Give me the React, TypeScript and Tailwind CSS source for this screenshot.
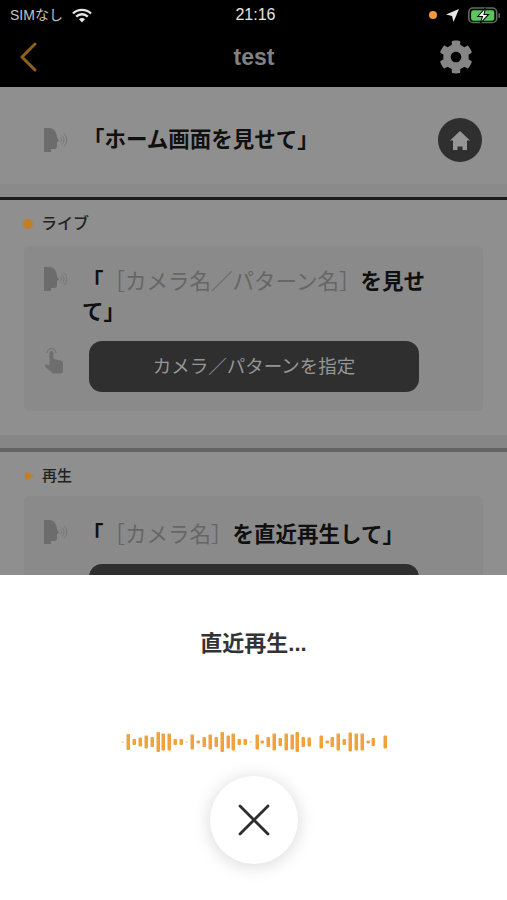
import { FaCog } from "react-icons/fa"

const JP = "font-['Liberation_Sans','Noto_Sans_CJK_JP',sans-serif]"

// [x, height] read off the reference
const bars: [number, number][] = [
  [123, 1], [128, 16], [134, 6], [140, 9], [146, 13], [152, 10], [158, 20], [163, 17], [169, 17], [175, 6], [181, 6],
  [187, 1], [192, 15], [198, 3], [204, 10], [210, 15], [216, 10], [222, 20], [228, 13], [233, 17], [239, 6], [245, 6],
  [251, 1], [257, 15], [262, 3], [268, 10], [274, 17], [280, 8], [286, 17], [292, 15], [297, 20], [303, 10], [309, 9],
  [321, 13], [327, 3], [332, 10], [338, 17], [344, 6], [350, 19], [356, 17], [362, 17], [368, 3], [373, 8], [385, 13],
]

function SpeakIcon() {
  return (
    <svg width="24" height="24" viewBox="0 0 24 24" className="shrink-0">
      <path d="M0 0h5c5 0 7.500 4 8 9l2 4-2 1v4c0 2-1 3-3 3H7v3H0z" fill="#6c6c6c" />
      <g fill="none" stroke="#777" strokeWidth="1">
        <path d="M16 9.500a3 3 0 0 1 0 5" />
        <path d="M18 7.500a6 6 0 0 1 0 9" />
        <path d="M20 5.500a9 9 0 0 1 0 13" />
      </g>
    </svg>
  )
}

function TapIcon() {
  return (
    <svg width="20" height="28" viewBox="0 0 20 28" className="shrink-0">
      <path d="M3 7a4.500 4.500 0 0 1 9 0" fill="none" stroke="#6e6e6e" strokeWidth="1" />
      <path
        d="M5.500 7a2 2 0 0 1 4 0v6l7 1.500c1.500.3 2.500 1.500 2.500 3V25c0 1.500-1 2.500-2.500 2.500H9L1 20.500c-1-1 .5-2.500 2-2l2.500 1z"
        fill="#6e6e6e"
      />
    </svg>
  )
}

function Bracketed({ name, rest }: { name: string; rest: string }) {
  return (
    <p className="text-[21.5px] leading-[30px] font-bold text-[#101010] [text-spacing-trim:space-all]">
      「<span className="font-normal text-[#666666]">［{name}］</span>
      {rest}
    </p>
  )
}

function PickButton() {
  return (
    <div className="flex h-[51px] w-[330px] items-center justify-center rounded-[13px] bg-[#2f2f2f] text-[18.500px] text-[#969696]">
      カメラ／パターンを指定
    </div>
  )
}

export default function App() {
  return (
    <div className={`flex h-[900px] w-[507px] flex-col overflow-hidden bg-white ${JP}`}>
      {/* status bar + nav */}
      <div className="h-[87px] shrink-0 bg-black">
        <div className="flex h-[30px] items-center justify-between pl-[10px] pr-[6px]">
          <div className="flex w-[160px] items-center gap-[9px] text-[14px] text-[#c4c4c4]">
            <span>SIMなし</span>
            <svg width="20" height="15" viewBox="0 0 20 15">
              <g fill="none" stroke="#e6e6e6" strokeWidth="2.400">
                <path d="M1 5.500a13 13 0 0 1 18 0" />
                <path d="M4.200 8.600a8.500 8.500 0 0 1 11.600 0" />
              </g>
              <path d="M7 11.300a4.200 4.200 0 0 1 6 0L10 14.500z" fill="#e6e6e6" />
            </svg>
          </div>
          <span className="text-[16px] font-medium text-[#e4e4e4]">21:16</span>
          <div className="flex w-[160px] items-center justify-end gap-[9px]">
            <span className="h-[8px] w-[8px] rounded-full bg-[#f59a3a]" />
            <svg width="13" height="13" viewBox="0 0 13 13">
              <path d="M13 0 7.500 13 6 7 0 5.500z" fill="#e8e8e8" />
            </svg>
            <svg width="33" height="17" viewBox="0 0 32 16">
              <rect x="0.800" y="0.800" width="27" height="14" rx="4" fill="none" stroke="#5f6f5f" strokeWidth="1.500" />
              <rect x="3" y="3" width="22.500" height="10" rx="2" fill="#58c85a" />
              <rect x="29.500" y="5.500" width="1.500" height="5" rx="0.700" fill="#666" />
              <path d="M17 0.500 9.500 9H14l-2 6.500L20 7h-4.500z" fill="#f4f4f4" stroke="#000" strokeWidth="1" />
            </svg>
          </div>
        </div>
        <div className="grid h-[57px] grid-cols-[1fr_auto_1fr] items-center pb-[3px] pl-[19px] pr-[34px]">
          <svg width="18" height="30" viewBox="0 0 18 30">
            <path d="M16 2 3 15l13 13" fill="none" stroke="#91601f" strokeWidth="3" strokeLinecap="round" strokeLinejoin="round" />
          </svg>
          <span className="font-['Liberation_Sans',sans-serif] text-[23px] font-bold text-[#828282] translate-x-[8px]">test</span>
          <FaCog className="h-[34px] w-[34px] justify-self-end text-[#858585]" />
        </div>
      </div>

      {/* dimmed page behind the sheet */}
      <div className="h-[488px] shrink-0 overflow-hidden bg-[#8f8f8f]">
        <div className="flex h-[97px] items-center justify-between pl-[44px] pr-[25px] pt-[9px]">
          <div className="flex items-center gap-[15px]">
            <SpeakIcon />
            <span className="text-[21.500px] font-bold text-[#101010]">「ホーム画面を見せて」</span>
          </div>
          <div className="flex h-[44px] w-[44px] items-center justify-center rounded-full bg-[#2f2f2f]">
            <svg width="20" height="19" viewBox="0 0 20 19">
              <path d="M10 0 0 9.500h3V19h4.500v-3.500h5V19H17V9.500h3z" fill="#969696" />
            </svg>
          </div>
        </div>
        <div className="h-[13px] bg-[#8a8a8a]" />
        <div className="h-[3px] bg-[#1b1b1b]" />

        <div className="flex h-[46px] items-center gap-[8px] pl-[23px] pt-[2px]">
          <span className="h-[10px] w-[10px] rounded-full bg-[#c07f27]" />
          <span className="text-[16px] font-medium text-[#222222]">ライブ</span>
        </div>
        <div className="mx-[24px] h-[165px] rounded-[6px] bg-[#8a8a8a] pl-[20px] pr-[32px] pt-[21px]">
          <div className="flex gap-[14px]">
            <SpeakIcon />
            <Bracketed name="カメラ名／パターン名" rest="を見せて」" />
          </div>
          <div className="mt-[14px] flex items-start gap-[25px]">
            <div className="pt-[5px]">
              <TapIcon />
            </div>
            <PickButton />
          </div>
        </div>
        <div className="h-[24px]" />
        <div className="h-[13px] bg-[#868686]" />
        <div className="h-[4px] bg-[#636363]" />

        <div className="flex h-[44px] items-center gap-[8px] pl-[25px] pt-[4px]">
          <svg width="9" height="10" viewBox="0 0 9 10">
            <path d="M0 0 9 5 0 10z" fill="#c07f27" />
          </svg>
          <span className="text-[15px] font-medium text-[#222222]">再生</span>
        </div>
        <div className="mx-[24px] h-[120px] rounded-[6px] bg-[#8a8a8a] pl-[20px] pr-[20px] pt-[24px]">
          <div className="flex gap-[14px]">
            <SpeakIcon />
            <Bracketed name="カメラ名" rest="を直近再生して」" />
          </div>
          <div className="mt-[14px] flex items-start gap-[25px]">
            <div className="w-[20px]" />
            <PickButton />
          </div>
        </div>
      </div>

      {/* voice sheet */}
      <div className="flex flex-1 flex-col items-center bg-white">
        <p className="mt-[54px] text-[22px] font-bold leading-[30px] text-[#333333]">直近再生...</p>
        <svg width="507" height="24" viewBox="0 0 507 24" className="mt-[71px] shrink-0">
          {bars.map(([x, h]) => (
            <rect key={x} x={x - 1.5} y={12 - h / 2} width={h > 1 ? 3.500 : 2} height={h} rx="1" fill="#f0a33c" />
          ))}
        </svg>
        <button className="mt-[22px] flex h-[88px] w-[88px] items-center justify-center rounded-full bg-white shadow-[0_2px_18px_rgba(0,0,0,0.16)]">
          <svg width="32" height="32" viewBox="0 0 32 32">
            <path d="M2 2l28 28M30 2 2 30" fill="none" stroke="#2e2e2e" strokeWidth="2.800" strokeLinecap="round" />
          </svg>
        </button>
      </div>
    </div>
  )
}
